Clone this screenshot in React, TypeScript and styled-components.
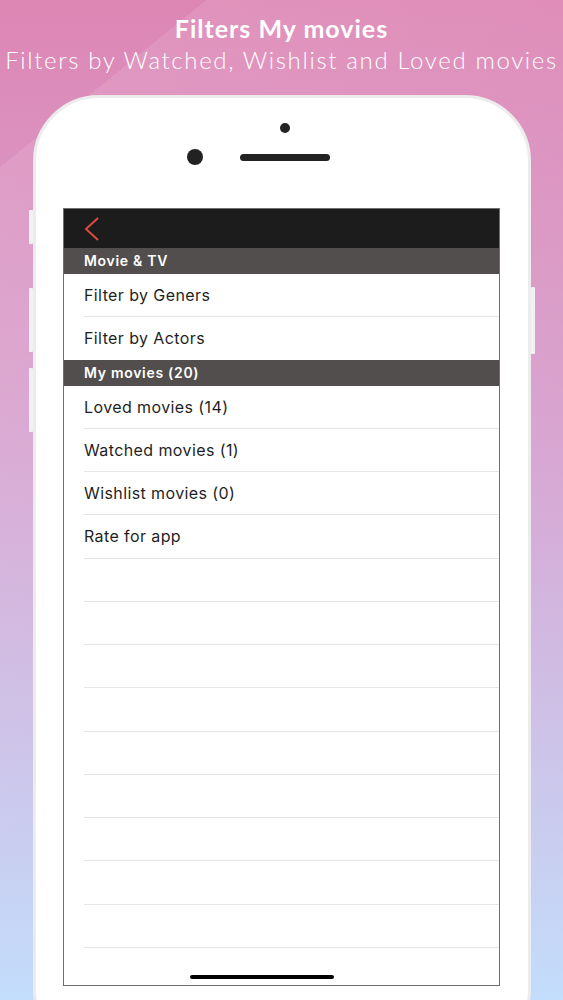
import styled, { createGlobalStyle } from "styled-components";

const GlobalStyle = createGlobalStyle`
	html, body {
		margin: 0;
		padding: 0;
	}
	body {
		font-family: "Inter", "Liberation Sans", sans-serif;
	}
`;

const Page = styled.div`
	width: 563px;
	height: 1000px;
	overflow: hidden;
	display: flex;
	flex-direction: column;
	align-items: center;
	background:
		linear-gradient(141deg, transparent 130px, rgba(255, 255, 255, 0.1) 130px, rgba(255, 255, 255, 0) 700px),
		linear-gradient(180deg, #dd86b4 0%, #d8a6d2 45%, #c3ddfc 100%);
`;

const Heading = styled.div`
	padding-top: 12px;
	text-align: center;
	color: #fff;
	font-family: "Lato", "Open Sans", sans-serif;
`;

const Title = styled.h1`
	margin: 0;
	font-size: 25px;
	line-height: 32px;
	font-weight: 700;
	letter-spacing: 1px;
`;

const Subtitle = styled.p`
	margin: 0;
	font-size: 24px;
	line-height: 32px;
	font-weight: 300;
	letter-spacing: 1.65px;
	white-space: nowrap;
`;

const Phone = styled.div`
	position: relative;
	flex-shrink: 0;
	margin-top: 19px;
	width: 498px;
	height: 960px;
	box-sizing: border-box;
	background: #fff;
	border: 3px solid #ececec;
	border-radius: 66px;
	padding-top: 25px;
`;

const SideButton = styled.div<{ $side: "left" | "right"; $top: number; $height: number }>`
	position: absolute;
	${(p) => (p.$side === "left" ? "left: -7px;" : "right: -7px;")}
	top: ${(p) => p.$top}px;
	width: 4px;
	height: ${(p) => p.$height}px;
	background: #f1f1f1;
	border-radius: 1px;
`;

const Sensors = styled.div`
	padding-left: 6px;
`;

const Camera = styled.div`
	width: 10px;
	height: 10px;
	margin: 0 auto;
	border-radius: 50%;
	background: #222;
`;

const SpeakerRow = styled.div`
	display: grid;
	grid-template-columns: 1fr auto 1fr;
	align-items: center;
	margin-top: 16px;
	height: 16px;
`;

const Lens = styled.div`
	justify-self: end;
	width: 16px;
	height: 16px;
	margin-right: 37px;
	border-radius: 50%;
	background: #222;
`;

const Speaker = styled.div`
	width: 90px;
	height: 7px;
	border-radius: 4px;
	background: #222;
`;

const Screen = styled.div`
	display: flex;
	flex-direction: column;
	width: 437px;
	height: 778px;
	box-sizing: border-box;
	margin: 43px auto 0;
	border: 1px solid #6f6f6f;
	background: #fff;
	overflow: hidden;
`;

const NavBar = styled.div`
	height: 39px;
	flex-shrink: 0;
	display: flex;
	align-items: center;
	padding-left: 20px;
	background: #1d1c1c;
`;

const SectionHeader = styled.div`
	height: 25.5px;
	flex-shrink: 0;
	display: flex;
	align-items: center;
	padding-left: 20px;
	background: #524e4e;
	color: #fff;
	font-size: 14px;
	font-weight: 600;
	letter-spacing: 0.7px;
`;

const Row = styled.div<{ $noLine?: boolean }>`
	height: 43.25px;
	flex-shrink: 0;
	box-sizing: border-box;
	margin-left: 20px;
	display: flex;
	align-items: center;
	color: #1f1f1f;
	font-size: 16px;
	letter-spacing: 0.4px;
	border-bottom: ${(p) => (p.$noLine ? "none" : "1px solid #e6e6e6")};
`;

const Footer = styled.div`
	flex: 1;
	display: flex;
	align-items: flex-end;
	justify-content: center;
	padding: 0 40px 6px 0;
`;

const HomeIndicator = styled.div`
	width: 144px;
	height: 4px;
	border-radius: 2px;
	background: #000;
`;

function BackChevron() {
	return (
		<svg width="16" height="24" viewBox="0 0 16 24">
			<polyline points="14,1 2,12 14,23" fill="none" stroke="#dc4a40" strokeWidth="2" />
		</svg>
	);
}

const myMovies = ["Loved movies (14)", "Watched movies (1)", "Wishlist movies (0)", "Rate for app"];

export default function App() {
	return (
		<>
			<GlobalStyle />
			<Page>
				<Heading>
					<Title>Filters My movies</Title>
					<Subtitle>Filters by Watched, Wishlist and Loved movies</Subtitle>
				</Heading>
				<Phone>
					<SideButton $side="left" $top={112} $height={34} />
					<SideButton $side="left" $top={190} $height={64} />
					<SideButton $side="left" $top={270} $height={64} />
					<SideButton $side="right" $top={189} $height={67} />
					<Sensors>
						<Camera />
						<SpeakerRow>
							<Lens />
							<Speaker />
							<span />
						</SpeakerRow>
					</Sensors>
					<Screen>
						<NavBar>
							<BackChevron />
						</NavBar>
						<SectionHeader>Movie &amp; TV</SectionHeader>
						<Row>Filter by Geners</Row>
						<Row $noLine>Filter by Actors</Row>
						<SectionHeader>My movies (20)</SectionHeader>
						{myMovies.map((label) => (
							<Row key={label}>{label}</Row>
						))}
						{Array.from({ length: 9 }).map((_, i) => (
							<Row key={i} />
						))}
						<Footer>
							<HomeIndicator />
						</Footer>
					</Screen>
				</Phone>
			</Page>
		</>
	);
}
